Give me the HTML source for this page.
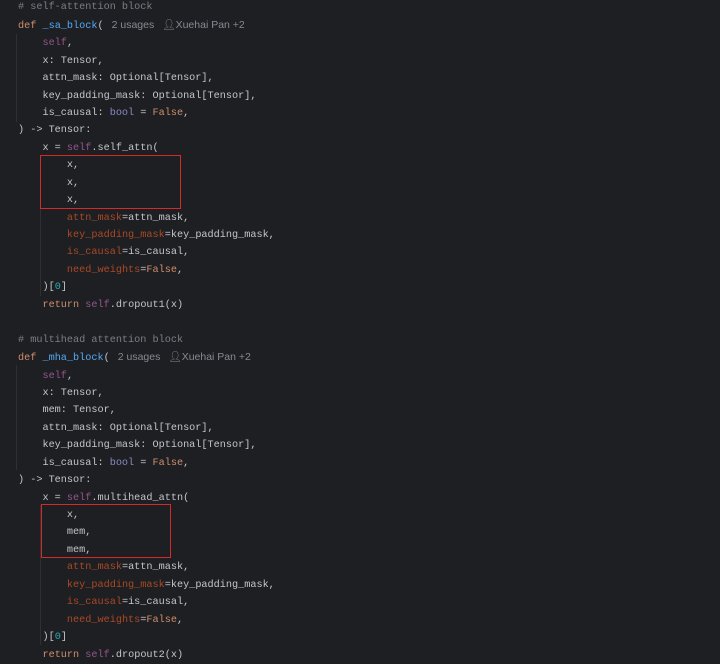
<html><head><style>
body{margin:0;width:720px;height:663px;background:#1e1f22;overflow:hidden;position:relative}
pre{margin:0;position:absolute;left:18px;top:-0.7px;font-family:"Liberation Mono",monospace;font-size:10.2px;line-height:17.43px;color:#c4c6cc}
.k{color:#cf8e6d}.f{color:#56a8f5}.s{color:#94558d}.c{color:#7a7e85}.p{color:#aa4926}.n{color:#2aacb8}
.h{font-family:"Liberation Sans",sans-serif;font-size:10.5px;color:#868a91;margin-left:8px}
.h i{font-style:normal;margin-left:8px}
.g{position:absolute;width:1px;background:#2f3034}
.box{position:absolute;border:1.5px solid #d42a2a;box-sizing:border-box}
</style></head><body>
<div class="g" style="left:16px;top:34px;height:88px"></div>
<div class="g" style="left:40px;top:156px;height:140px"></div>
<div class="g" style="left:16px;top:365px;height:105px"></div>
<div class="g" style="left:40px;top:505px;height:140px"></div>
<pre><span class="c"># self-attention block</span>
<span class="k">def</span> <span class="f">_sa_block</span>(<span class="h">2 usages<i>&#128100;&#xFE0E;Xuehai Pan +2</i></span>
    <span class="s">self</span>,
    x: Tensor,
    attn_mask: Optional[Tensor],
    key_padding_mask: Optional[Tensor],
    is_causal: <span class="s" style="color:#8888c6">bool</span> = <span class="k">False</span>,
) -&gt; Tensor:
    x = <span class="s">self</span>.self_attn(
        x,
        x,
        x,
        <span class="p">attn_mask</span>=attn_mask,
        <span class="p">key_padding_mask</span>=key_padding_mask,
        <span class="p">is_causal</span>=is_causal,
        <span class="p">need_weights</span>=<span class="k">False</span>,
    )[<span class="n">0</span>]
    <span class="k">return</span> <span class="s">self</span>.dropout1(x)

<span class="c"># multihead attention block</span>
<span class="k">def</span> <span class="f">_mha_block</span>(<span class="h">2 usages<i>&#128100;&#xFE0E;Xuehai Pan +2</i></span>
    <span class="s">self</span>,
    x: Tensor,
    mem: Tensor,
    attn_mask: Optional[Tensor],
    key_padding_mask: Optional[Tensor],
    is_causal: <span class="s" style="color:#8888c6">bool</span> = <span class="k">False</span>,
) -&gt; Tensor:
    x = <span class="s">self</span>.multihead_attn(
        x,
        mem,
        mem,
        <span class="p">attn_mask</span>=attn_mask,
        <span class="p">key_padding_mask</span>=key_padding_mask,
        <span class="p">is_causal</span>=is_causal,
        <span class="p">need_weights</span>=<span class="k">False</span>,
    )[<span class="n">0</span>]
    <span class="k">return</span> <span class="s">self</span>.dropout2(x)</pre>
<div class="box" style="left:40px;top:155px;width:141px;height:54px"></div>
<div class="box" style="left:41px;top:504px;width:130px;height:54px"></div>
</body></html>
